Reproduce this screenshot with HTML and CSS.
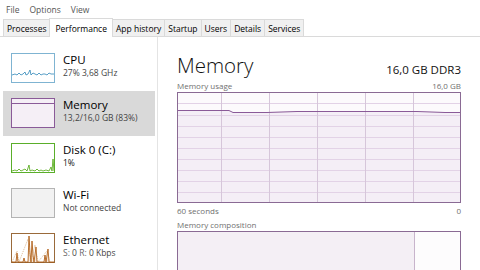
FILE: index.html
```html
<!DOCTYPE html>
<html lang="en">

<head>
    <meta charset="UTF-8">
    <title>Task Manager</title>
    <link rel="stylesheet" href="styles.css">
</head>

<body>
    <!-- menu -->
    <div class="menubar">
        <span>File</span>
        <span>Options</span>
        <span>View</span>
    </div>
    <!-- tabs -->
    <div class="tabs">
        <span class="tab">Processes</span>
        <span class="tab active">Performance</span>
        <span class="tab">App history</span>
        <span class="tab">Startup</span>
        <span class="tab">Users</span>
        <span class="tab">Details</span>
        <span class="tab">Services</span>
    </div>

    <div class="main">
        <!-- left list -->
        <div class="sidebar">
            <div class="item">
                <svg class="thumb" width="44" height="30" viewBox="0 0 44 30">
                    <rect x="0.5" y="0.5" width="43" height="29" fill="#fff" stroke="#7fb4d2" />
                    <polyline fill="none" stroke="#2f86b8" stroke-width="0.8" points="1,22 4,21 6,22 8,20 10,22 12,21 14,19 15,22 17,21 19,17 20,22 22,20 24,21 26,22 28,20 30,22 32,21 34,21 36,22 38,20 40,21 43,21" />
                </svg>
                <div class="info">
                    <div class="name">CPU</div>
                    <div class="sub">27% 3,68 GHz</div>
                </div>
            </div>
            <div class="item selected">
                <svg class="thumb" width="44" height="30" viewBox="0 0 44 30">
                    <rect x="0.5" y="0.5" width="43" height="29" fill="#f5eff6" stroke="#8a5a98" />
                    <line x1="1" y1="5.5" x2="43" y2="5.5" stroke="#8a5a98" />
                </svg>
                <div class="info">
                    <div class="name">Memory</div>
                    <div class="sub">13,2/16,0 GB (83%)</div>
                </div>
            </div>
            <div class="item">
                <svg class="thumb" width="44" height="30" viewBox="0 0 44 30">
                    <rect x="0.5" y="0.5" width="43" height="29" fill="#fff" stroke="#5aae2a" />
                    <polyline fill="none" stroke="#4da60c" stroke-width="0.8" points="1,28 4,27 6,28 8,26 10,28 12,27 14,26 16,28 18,22 19,28 21,27 24,28 26,26 28,28 30,27 32,28 35,27 38,28 40,24 41,28 42,16 43,28" />
                </svg>
                <div class="info">
                    <div class="name">Disk 0 (C:)</div>
                    <div class="sub dark">1%</div>
                </div>
            </div>
            <div class="item">
                <svg class="thumb" width="44" height="30" viewBox="0 0 44 30">
                    <rect x="0.5" y="0.5" width="43" height="29" fill="#f2f2f2" stroke="#b4b4b4" />
                </svg>
                <div class="info">
                    <div class="name">Wi-Fi</div>
                    <div class="sub">Not connected</div>
                </div>
            </div>
            <div class="item">
                <svg class="thumb" width="44" height="30" viewBox="0 0 44 30">
                    <rect x="0.5" y="0.5" width="43" height="29" fill="#fff" stroke="#9a6a3a" />
                    <polyline fill="#f6e6d8" stroke="#a74f01" stroke-width="0.8" points="1,29 5,29 6,20 7,29 12,29 13,25 14,29 17,29 18,3 19,20 20,29 21,8 22,22 23,29 25,14 26,29 33,29 34,22 35,29 37,16 38,29 43,29" />
                    <polyline fill="none" stroke="#c58a4a" stroke-width="0.6" stroke-dasharray="1,1" points="1,29 6,18 8,29 17,6 20,29 24,12 27,29 36,18 39,29" />
                </svg>
                <div class="info">
                    <div class="name">Ethernet</div>
                    <div class="sub"><span class="lbl">S:</span> 0 <span class="lbl">R:</span> 0 Kbps</div>
                </div>
            </div>
        </div>

        <!-- right detail -->
        <div class="detail">
            <div class="head">
                <div class="title">Memory</div>
                <div class="spec">16,0 GB DDR3</div>
            </div>
            <div class="labels">
                <span>Memory usage</span>
                <span>16,0 GB</span>
            </div>
            <svg class="graph" width="284" height="111" viewBox="0 0 284 111">
                <rect x="0.5" y="0.5" width="283" height="110" fill="#fcfafc" />
                <polygon fill="#f4eef6" points="1,18 52,18 56,20 90,20 120,19 180,19 240,19 268,20 283,20 283,110 1,110" />
                <g stroke="#e2d2e6" stroke-width="1">
                    <line x1="1" y1="11.5" x2="283" y2="11.5" />
                    <line x1="1" y1="23.5" x2="283" y2="23.5" />
                    <line x1="1" y1="34.5" x2="283" y2="34.5" />
                    <line x1="1" y1="45.5" x2="283" y2="45.5" />
                    <line x1="1" y1="56.5" x2="283" y2="56.5" />
                    <line x1="1" y1="67.5" x2="283" y2="67.5" />
                    <line x1="1" y1="78.5" x2="283" y2="78.5" />
                    <line x1="1" y1="89.5" x2="283" y2="89.5" />
                    <line x1="1" y1="100.5" x2="283" y2="100.5" />
                </g>
                <g stroke="#d6c6da" stroke-width="1">
                    <line x1="44.5" y1="1" x2="44.5" y2="110" />
                    <line x1="92.5" y1="1" x2="92.5" y2="110" />
                    <line x1="140.5" y1="1" x2="140.5" y2="110" />
                    <line x1="188.5" y1="1" x2="188.5" y2="110" />
                    <line x1="236.5" y1="1" x2="236.5" y2="110" />
                </g>
                <polyline fill="none" stroke="#8a5a98" stroke-width="1" points="1,18.5 52,18.5 56,20.5 90,20.5 120,19.5 180,19.5 240,19.5 268,20.5 283,20.5" />
                <rect x="0.5" y="0.5" width="283" height="110" fill="none" stroke="#8a6a94" />
            </svg>
            <div class="labels axis">
                <span>60 seconds</span>
                <span>0</span>
            </div>
            <div class="labels">
                <span>Memory composition</span>
            </div>
            <svg class="graph" width="284" height="40" viewBox="0 0 284 40">
                <rect x="0.5" y="0.5" width="283" height="45" fill="#fdfcfd" stroke="#8a6a94" />
                <rect x="1" y="1" width="236" height="44" fill="#f4eff5" />
                <line x1="237.5" y1="1" x2="237.5" y2="40" stroke="#c8b4cc" />
            </svg>
        </div>
    </div>
</body>

</html>
```

FILE: styles.css
```css
* {
    margin: 0;
    padding: 0;
    box-sizing: border-box;
}

body {
    width: 480px;
    height: 270px;
    overflow: hidden;
    background: #fff;
    font-family: "Open Sans", "Noto Sans", sans-serif;
    color: #000;
}

.menubar {
    height: 19px;
    display: flex;
    align-items: center;
    gap: 10px;
    padding-left: 6px;
    font-size: 8.5px;
    color: #555;
}

/* tabs */
.tabs {
    height: 18px;
    display: flex;
    align-items: flex-end;
    padding-left: 3px;
    border-bottom: 1px solid #dadada;
}

.tab {
    height: 17px;
    padding: 0 3px;
    display: flex;
    align-items: center;
    font-size: 8.5px;
    background: #f0f0f0;
    border: 1px solid #dadada;
    border-bottom: none;
    margin-right: -1px;
}

.tab.active {
    height: 19px;
    margin-bottom: -1px;
    padding: 0 5px;
    background: #fff;
    position: relative;
}

.main {
    display: flex;
    height: 233px;
}

/* left column */
.sidebar {
    width: 158px;
    padding: 9px 0 0 3px;
    border-right: 1px solid #e4e4e4;
}

.item {
    height: 45px;
    width: 152px;
    display: flex;
    align-items: flex-start;
    padding: 7px 0 0 8px;
}

.item.selected {
    background: #d9d9d9;
}

.thumb {
    flex: none;
    display: block;
}

.info {
    margin-left: 8px;
    margin-top: -1px;
}

.name {
    font-size: 11.5px;
    line-height: 15px;
}

.sub {
    font-size: 8.5px;
    line-height: 11px;
    color: #444;
}

.sub.dark {
    color: #111;
}

.sub .lbl {
    color: #666;
}

/* right column */
.detail {
    flex: 1;
    padding: 9px 18px 0 19px;
}

.head {
    width: 284px;
    display: flex;
    justify-content: space-between;
    align-items: flex-end;
    height: 34px;
}

.title {
    font-size: 20.5px;
    font-weight: 300;
    line-height: 30px;
    color: #111;
}

.spec {
    font-size: 11.5px;
    line-height: 20px;
    color: #111;
}

.labels {
    width: 284px;
    display: flex;
    justify-content: space-between;
    font-size: 8px;
    line-height: 12px;
    color: #707070;
}

.labels.axis {
    line-height: 15px;
    height: 16px;
}

.graph {
    display: block;
}
```
